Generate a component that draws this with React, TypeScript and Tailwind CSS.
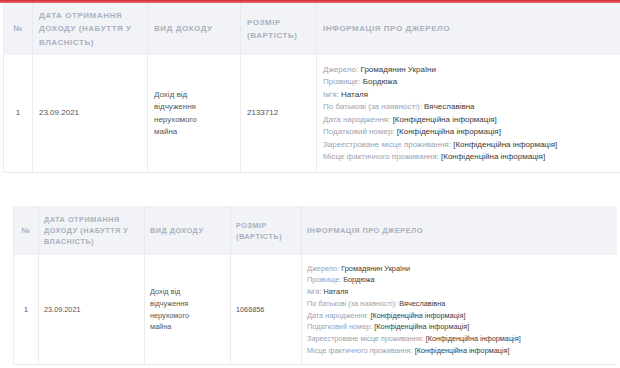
const SOURCE = [
  ["Джерело:", "Громадянин України"],
  ["Прізвище:", "Бордюжа"],
  ["Ім'я:", "Наталя"],
  ["По батькові (за наявності):", "Вячеславівна"],
  ["Дата народження:", "[Конфіденційна інформація]"],
  ["Податковий номер:", "[Конфіденційна інформація]"],
  ["Зареєстроване місце проживання:", "[Конфіденційна інформація]"],
  ["Місце фактичного проживання:", "[Конфіденційна інформація]"],
];

type Variant = {
  wrap: string;
  cols: string;
  head: string;
  headText: string;
  body: string;
  bodyText: string;
  pad: string;
};

const BIG: Variant = {
  wrap: "ml-[3px] w-[617px]",
  cols: "grid grid-cols-[29px_115px_93px_76px_1fr]",
  head: "h-[52px]",
  headText: "text-[8px] leading-[13.5px] tracking-[0.55px]",
  body: "h-[117px]",
  bodyText: "text-[8px] leading-[12.5px]",
  pad: "px-[6px]",
};

const SMALL: Variant = {
  wrap: "ml-[13px] w-[604px]",
  cols: "grid grid-cols-[25px_106px_86px_71px_1fr]",
  head: "h-[49px]",
  headText: "text-[7.3px] leading-[11px] tracking-[0.5px]",
  body: "h-[109px]",
  bodyText: "text-[7.3px] leading-[11.7px]",
  pad: "px-[5px]",
};

function IncomeTable({ v, amount }: { v: Variant; amount: string }) {
  const th = `flex items-center border-r border-[#e6e9ee] ${v.pad} font-bold uppercase text-[#a9b1c1]`;
  const td = `flex items-center border-r border-[#ececec] ${v.pad} text-[#555]`;
  return (
    <div className={`${v.wrap} border-l border-b border-[#ececec]`}>
      <div className={`${v.cols} ${v.head} ${v.headText} bg-[#f1f3f6]`}>
        <div className={`${th} justify-center px-0`}>№</div>
        <div className={th}>Дата отримання доходу (набуття у власність)</div>
        <div className={th}>Вид доходу</div>
        <div className={th}>Розмір (вартість)</div>
        <div className={`${th} border-r-0`}>Інформація про джерело</div>
      </div>
      <div className={`${v.cols} ${v.body} ${v.bodyText}`}>
        <div className={`${td} justify-center px-0`}>1</div>
        <div className={td}>23.09.2021</div>
        <div className={td}>
          <span className="w-[60px]">Дохід від відчуження нерухомого майна</span>
        </div>
        <div className={td}>{amount}</div>
        <div className={`${v.pad} flex flex-col justify-center`}>
          {SOURCE.map(([label, value]) => (
            <div key={label} className="whitespace-nowrap">
              <span className="text-[#9aa2b1]">{label} </span>
              <span className="text-[#3a3a3a]">{value}</span>
            </div>
          ))}
        </div>
      </div>
    </div>
  );
}

export default function App() {
  return (
    <div className="w-[620px] h-[368px] overflow-hidden bg-white font-['Liberation_Sans',Arial,sans-serif]">
      <div className="h-[3px] bg-gradient-to-b from-[#d3262c] to-[#e86a6e]" />
      <IncomeTable v={BIG} amount="2133712" />
      <div className="h-[33px]" />
      <IncomeTable v={SMALL} amount="1066856" />
    </div>
  );
}
